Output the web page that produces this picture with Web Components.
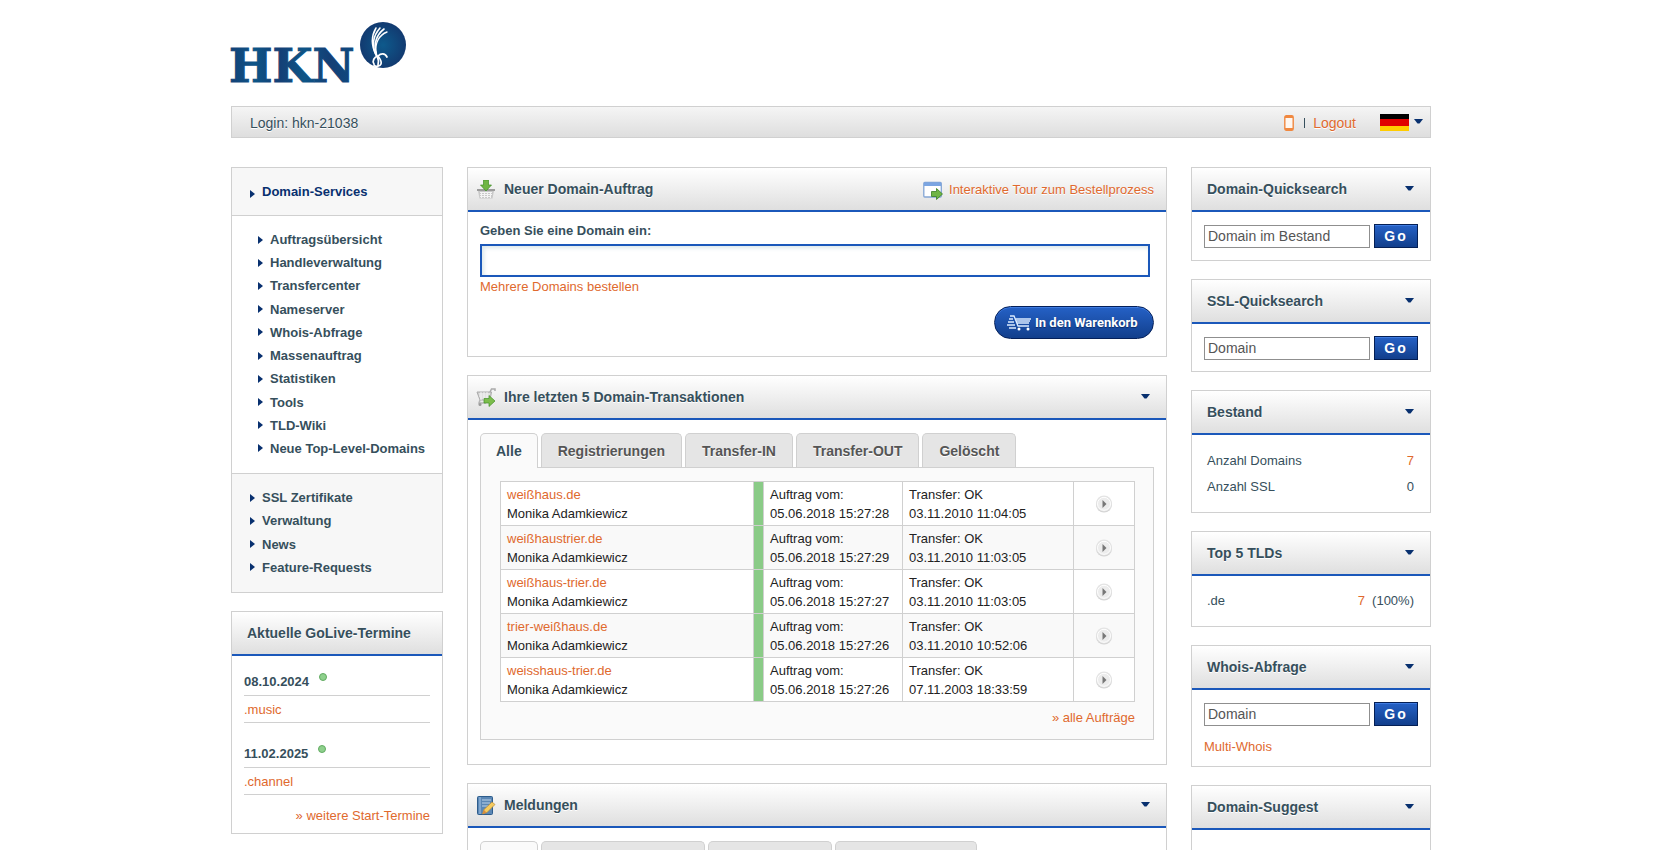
<!DOCTYPE html>
<html lang="de">
<head>
<meta charset="utf-8">
<meta name="viewport" content="width=device-width, initial-scale=1">
<title>HKN Domain-Services</title>
<style>
  html { --ink: #364f5c; --link: #e0692e; --navy: #08306f; --blue: #1b58ba; --line: #d0d0d0; --head: linear-gradient(#fff, #dfdfdf); }
  body { margin: 0; background: #fff; color: var(--ink); font: 13px/18px "Liberation Sans", Arial, sans-serif; }
</style>
</head>
<body>
<hkn-app></hkn-app>

<script>
const define = (name, html, setup) => {
  const tpl = document.createElement('template');
  tpl.innerHTML = `<style>
    *, :host { box-sizing: border-box; }
    a { color: var(--link); text-decoration: none; }
    a:hover { text-decoration: underline; }
  </style>${html}`;
  customElements.define(name, class extends HTMLElement {
    connectedCallback() {
      if (this.shadowRoot) return;
      this.attachShadow({ mode: 'open' }).append(tpl.content.cloneNode(true));
      if (setup) setup(this.shadowRoot, this);
    }
  });
};

define('hkn-arrow', `
  <style>
    :host { display: block; flex: none; width: 9px; height: 5px; }
    svg { display: block; }
  </style>
  <svg width="9" height="5" viewBox="0 0 9 5" aria-hidden="true"><path d="M0 0h9L5.5 4.5h-2z" fill="#08306f"/></svg>`);

define('hkn-logo', `
  <style>:host { display: block; margin-left: -4px; } svg { display: block; }</style>
  <svg width="184" height="78" viewBox="-4 0 184 78" role="img" aria-label="HKN">
    <defs>
      <radialGradient id="g"><stop offset="0" stop-color="#0e5a8c"/><stop offset="1" stop-color="#123a70"/></radialGradient>
      <linearGradient id="t" x1="0" x2="1"><stop offset="0" stop-color="#143f75"/><stop offset=".2" stop-color="#0d5587"/><stop offset=".4" stop-color="#143f75"/><stop offset=".6" stop-color="#0d5587"/><stop offset=".8" stop-color="#143f75"/><stop offset="1" stop-color="#0d4a80"/></linearGradient>
    </defs>
    <text x="-2" y="63" font-family="DejaVu Serif" font-weight="700" font-size="46" fill="url(#t)" stroke="url(#t)" stroke-width="1">HKN</text>
    <circle cx="152" cy="26" r="23" fill="url(#g)"/>
    <g fill="none" stroke="#fff" stroke-linecap="round">
      <path d="M145 36C141 28 139 19 145 9" stroke-width="1.5"/>
      <path d="M145 36C141 27 142 17 149 9" stroke-width="1.6"/>
      <path d="M145 35C143 26 144 17 153 10" stroke-width="1.6"/>
      <path d="M145 33C144 24 148 16 156 13" stroke-width="1.4"/>
      <path d="M145 33c0 5 4 6 2 13M143 45c-2-3 0-7 4-8 3-3 7-3 9 1M143 46c1 2 6 2 7-1 1-3-1-5-3-8" stroke-width="1.7"/>
    </g>
  </svg>`);

define('hkn-login-bar', `
  <style>
    :host { display: flex; align-items: center; height: 32px; padding: 1px 7px 0 18px; border: 1px solid var(--line); background: linear-gradient(#f5f5f5, #dedede); font-size: 14px; text-shadow: 0 1px 0 #fff; }
    .user { flex: 1; }
    nav { display: flex; align-items: center; }
    .phone { margin-right: 10px; display: block; }
    .phone svg, .lang svg { display: block; }
    .bar { width: 1px; height: 10px; background: var(--ink); margin-right: 8px; }
    .lang { display: flex; align-items: center; gap: 5px; margin-left: 24px; padding: 0; border: 0; background: none; }
    .lang hkn-arrow { margin-top: -3px; }
  </style>
  <span class="user">Login: hkn-21038</span>
  <nav>
    <a class="phone" href="#mobil" aria-label="Mobile Ansicht"><svg width="10" height="16" viewBox="0 0 10 16"><rect x=".8" y=".8" width="8.4" height="14.4" rx="1.5" fill="#fff7f0" stroke="#f08840" stroke-width="1.4"/><path d="M1 1h8v2H1zM1 13h8v2H1z" fill="#f08840"/></svg></a>
    <span class="bar"></span>
    <a href="#logout">Logout</a>
    <button class="lang" aria-label="Sprache: Deutsch"><svg width="29" height="17" viewBox="0 0 29 17"><path fill="#000" d="M0 0h29v6H0z"/><path fill="#e00000" d="M0 5h29v7H0z"/><path fill="#fc0" d="M0 12h29v5H0z"/></svg><hkn-arrow></hkn-arrow></button>
  </nav>`);

define('hkn-nav', `
  <style>
    :host { display: block; border: 1px solid var(--line); background: #f7f7f7; font-weight: 700; }
    a { color: var(--ink); display: flex; align-items: center; gap: 7px; line-height: 15px; }
    a::before { content: ""; border-left: 5px solid var(--navy); border-top: 4px solid transparent; border-bottom: 4px solid transparent; }
    .top { height: 47px; padding: 0 18px; display: flex; align-items: center; }
    .top a { color: var(--navy); }
    .top a::before { margin-top: 4px; }
    ul { list-style: none; margin: 0; display: flex; flex-direction: column; justify-content: space-between; }
    .sub { min-height: 259px; padding: 16px 12px 17px 26px; background: #fff; border: solid var(--line); border-width: 1px 0; }
    .more { min-height: 118px; padding: 16px 18px 17px; }
  </style>
  <div class="top"><a href="#domains">Domain-Services</a></div>
  <ul class="sub"></ul>
  <ul class="more"></ul>`, root => {
  const fill = (sel, items) => root.querySelector(sel).innerHTML = items.map(t => `<li><a href="#${t.toLowerCase().replace(/\W+/g, '-')}">${t}</a></li>`).join('');
  fill('.sub', ['Auftragsübersicht', 'Handleverwaltung', 'Transfercenter', 'Nameserver', 'Whois-Abfrage', 'Massenauftrag', 'Statistiken', 'Tools', 'TLD-Wiki', 'Neue Top-Level-Domains']);
  fill('.more', ['SSL Zertifikate', 'Verwaltung', 'News', 'Feature-Requests']);
});

define('hkn-panel', `
  <style>
    :host { display: block; border: 1px solid var(--line); background: #fff; }
    header { display: flex; align-items: center; height: 44px; padding: 0 16px 0 15px; background: var(--head); border-bottom: 2px solid var(--blue); }
    :host([icon]) header { padding-left: 8px; }
    h2 { flex: 1; margin: 0; font-size: 14px; line-height: 18px; text-shadow: 0 1px 0 #fff; }
    :host([icon]) h2 { margin-left: 8px; }
    hkn-arrow { margin-top: -2px; }
    :host([plain]) header { padding-right: 12px; }
    :host([plain]) hkn-arrow { display: none; }
    .body { padding: var(--pad, 12px); }
  </style>
  <header><slot name="icon"></slot><h2></h2><slot name="extra"></slot><hkn-arrow></hkn-arrow></header>
  <div class="body"><slot></slot></div>`, (root, el) => {
  root.querySelector('h2').textContent = el.getAttribute('heading');
});

const icons = {
  basket: `<path d="M1 9h18l-1 2-1.500 7.500h-13L2 11z" fill="#c9c9c9"/><path d="M1 9h18v2H1z" fill="#9c9c9c"/><path d="M4 12.500h12M4 14.500h12M4 16.500h11M5.500 12v6M8.500 12v6M11.500 12v6M14.500 12v6" stroke="#f4f4f4"/><path d="M7.500 0h5v5h3L10 11 4.500 5h3z" fill="#6fb544" stroke="#3f8e25" stroke-width=".7"/>`,
  cart: `<path d="M1 4h14.500L14 12H4z" fill="#cfcfcf" stroke="#aaa"/><path d="M14 4l1.500-3H19v2" stroke="#aaa" fill="none" stroke-width="1.500"/><path d="M3 6h11M3 8h11M4 10h9M5 4v8M8 4v8M11 4v8" stroke="#f3f3f3"/><path d="M4 12l-1 3h7" fill="none" stroke="#b5b5b5" stroke-width="1.500"/><circle cx="4" cy="16.500" r="1.500" fill="#999"/><path d="M8 10.500h5V7.500L19 13l-6 5.500V15H8z" fill="#7cbd4c" stroke="#438f28" stroke-width=".7"/>`,
  note: `<rect x="1.500" y=".5" width="15" height="18" rx="1" fill="#5b87b5" stroke="#2d5c8c"/><path d="M4 1v17" stroke="#7fa6cf" stroke-width="2"/><path d="M6 4h9M6 7h8M6 10h6" stroke="#bcd3ea"/><path d="M6.500 18l1.500-4.500 8-7.500 3 2.500-8 8z" fill="#f6cb5e" stroke="#b58a3a" stroke-width=".7"/><path d="M6.500 18l1.500-4 2.500 2.500z" fill="#d98b3c"/>`,
  tour: `<rect x=".8" y="1.500" width="17.500" height="14.500" rx="1" fill="#fff" stroke="#84a5d4" stroke-width="1.300"/><path d="M1 1.500h17V5H1z" fill="#7ba5e2"/><path d="M8.500 10.500h5V7.500L19.500 13 13.500 18.500V15.500H8.500z" fill="#6fb544" stroke="#3a7d23" stroke-width=".8"/>`
};
define('hkn-icon', `
  <style>:host { display: block; flex: none; } svg { display: block; }</style>
  <svg width="20" height="19" viewBox="0 0 20 19" aria-hidden="true"></svg>`, (root, el) => {
  root.querySelector('svg').innerHTML = icons[el.getAttribute('name')];
});

define('hkn-golive', `
  <style>
    :host { display: block; }
    .date { display: flex; align-items: center; gap: 10px; height: 27px; border-bottom: 1px solid var(--line); }
    .date::after { content: ""; width: 8px; height: 8px; border-radius: 4px; margin-top: -10px; background: #8ed08c; border: 1px solid #62ab62; box-sizing: border-box; }
    .name { height: 27px; line-height: 27px; border-bottom: 1px solid var(--line); margin-bottom: 18px; }
    .all { text-align: right; margin-top: -6px; }
  </style>
  <div class="date"><b>08.10.2024</b></div>
  <div class="name"><a href="#music">.music</a></div>
  <div class="date"><b>11.02.2025</b></div>
  <div class="name"><a href="#channel">.channel</a></div>
  <div class="all"><a href="#termine">» weitere Start-Termine</a></div>`);

define('hkn-order', `
  <style>
    :host { display: flex; flex-direction: column; }
    label { font-weight: 700; line-height: 18px; margin-bottom: 4px; }
    input { height: 33px; margin-right: 4px; padding: 0 8px; border: 2px solid var(--blue); box-shadow: inset 2px 2px 4px #dbe7ea; font: inherit; outline: 0; }
    a { line-height: 20px; }
    button { align-self: flex-end; display: flex; align-items: center; gap: 4px; width: 160px; height: 33px; margin-top: 9px; padding: 0 0 0 12px; border: 1px solid #04205a; border-radius: 17px; color: #fff; background: linear-gradient(#2561c6, #123f8c); box-shadow: inset 0 1px 0 #3f7be0; font: 700 13px Roboto, sans-serif; white-space: nowrap; text-shadow: 0 1px 1px #0b2b66; }
    svg { flex: none; }
  </style>
  <label for="d">Geben Sie eine Domain ein:</label>
  <input id="d" type="text">
  <a href="#mehrere">Mehrere Domains bestellen</a>
  <button><svg width="24" height="16" viewBox="0 0 24 16" aria-hidden="true"><g fill="none" stroke="#dcecff" stroke-width="1.300"><path d="M3 1h4l4 10h11M8 4h16M9 6h14M10 8h12M2 4h4M1 7h6M0 10h8M2 13h7"/></g><circle cx="12" cy="14" r="1.500" fill="#fff"/><circle cx="21" cy="14" r="1.500" fill="#fff"/></svg>In den Warenkorb</button>`);

define('hkn-tabs', `
  <style>
    :host { display: block; }
    [role=tablist] { display: flex; gap: 3px; }
    button { height: 34px; padding: 0 16px; border: 1px solid var(--line); border-bottom: 0; border-radius: 5px 5px 0 0; background: #e5e5e5; color: #555; font: 700 14px "Liberation Sans", Arial, sans-serif; white-space: nowrap; text-shadow: 0 1px 0 #fff; }
    [aria-selected=true] { height: 35px; margin-bottom: -1px; padding: 0 15px; background: #fafafa; color: var(--ink); position: relative; }
    .box { border: 1px solid var(--line); background: #fafafa; padding: 13px 18px 12px 19px; }
  </style>
  <div role="tablist"></div>
  <div class="box"><slot></slot></div>`, (root, el) => {
  root.querySelector('[role=tablist]').innerHTML = el.getAttribute('labels').split('|').map((t, i) => `<button role="tab" aria-selected="${i === 0}">${t}</button>`).join('');
});

define('hkn-orders', `
  <style>
    :host { display: block; color: #222; }
    table { width: 100%; border-collapse: collapse; table-layout: fixed; line-height: 19px; }
    td { height: 44px; border: 1px solid var(--line); padding: 2px 6px; background: #fff; vertical-align: middle; white-space: nowrap; }
    tr:nth-child(even) td { background: #f9f9f9; }
    tr td.ok { background: #8acb87; padding: 0; }
    td.go { padding: 0; }
    button { display: block; margin: 0 auto; padding: 0; border: 0; background: none; width: 18px; height: 18px; }
    .all { text-align: right; line-height: 18px; margin-top: 7px; }
  </style>
  <table><colgroup><col><col style="width:10px"><col style="width:139px"><col style="width:171px"><col style="width:61px"></colgroup><tbody></tbody></table>
  <div class="all"><a href="#alle">» alle Aufträge</a></div>`, root => {
  root.querySelector('tbody').innerHTML = [
    ['weißhaus.de', '15:27:28', '03.11.2010 11:04:05'],
    ['weißhaustrier.de', '15:27:29', '03.11.2010 11:03:05'],
    ['weißhaus-trier.de', '15:27:27', '03.11.2010 11:03:05'],
    ['trier-weißhaus.de', '15:27:26', '03.11.2010 10:52:06'],
    ['weisshaus-trier.de', '15:27:26', '07.11.2003 18:33:59']
  ].map(([d, t, x]) => `<tr><td><a href="#${d}">${d}</a><br>Monika Adamkiewicz</td><td class="ok"></td><td>Auftrag vom:<br>05.06.2018 ${t}</td><td>Transfer: OK<br>${x}</td><td class="go"><button aria-label="Details ${d}"><svg width="18" height="18" viewBox="0 0 18 18"><circle cx="9" cy="9.500" r="8" fill="#d2d2d2"/><circle cx="9" cy="8.500" r="8" fill="#e4e4e4"/><circle cx="9" cy="8.800" r="6.500" fill="#ececec" stroke="#fff"/><path d="M7.500 5l4 4-4 4z" fill="#777"/></svg></button></td></tr>`).join('');
});

define('hkn-go', `
  <style>
    :host { display: block; }
    form { display: flex; align-items: center; gap: 4px; }
    input { flex: 1; min-width: 0; height: 23px; padding: 0 3px; border: 1px solid #8f8f8f; font: 14px "Liberation Sans", Arial, sans-serif; color: #555; background: #fff; }
    button { flex: none; width: 44px; height: 24px; padding: 0; border: 1px solid #041f55; background: linear-gradient(#2561c6, #123f8c); box-shadow: inset 0 1px 0 #3f7be0; color: #fff; font: 700 14px "Liberation Sans", Arial, sans-serif; letter-spacing: 2px; }
  </style>
  <form><input type="text"><button type="button">Go</button></form>`, (root, el) => {
  const i = root.querySelector('input');
  i.value = el.getAttribute('value');
  i.setAttribute('aria-label', el.getAttribute('value'));
});

define('hkn-stat', `
  <style>
    :host { display: flex; justify-content: space-between; padding: 0 4px 0 3px; line-height: 26px; }
    span:last-child { white-space: pre; }
  </style>
  <span><slot></slot></span><span><slot name="value"></slot></span>`);

define('hkn-app', `
  <style>
    :host { display: block; max-width: 1205px; margin: 0 auto; padding: 19px 0 18px 5px; }
    hkn-login-bar { margin: 9px 0 29px; }
    main { display: grid; grid-template-columns: 212px minmax(0, 1fr) 240px; gap: 24px; align-items: start; }
    section { display: flex; flex-direction: column; gap: 18px; min-width: 0; }
    .live { --pad: 13px 12px 8px; }
    .order { --pad: 10px 12px 17px; }
    .tabs { --pad: 13px 12px 24px; }
    .ssl { --pad: 12px 12px 11px; }
    .stat { --pad: 13px 12px 12px; }
    .top { --pad: 12px; }
    .whois { --pad: 12px 12px 10px; }
    .suggest { --pad: 32px 12px; }
    .multi { line-height: 18px; margin-top: 12px; display: block; }
    .tour { display: flex; align-items: center; gap: 6px; margin-top: 2px; text-shadow: 0 1px 0 #fff; }
  </style>
  <hkn-logo></hkn-logo>
  <hkn-login-bar></hkn-login-bar>
  <main>
    <section>
      <hkn-nav></hkn-nav>
      <hkn-panel class="live" plain heading="Aktuelle GoLive-Termine"><hkn-golive></hkn-golive></hkn-panel>
    </section>
    <section>
      <hkn-panel class="order" icon plain heading="Neuer Domain-Auftrag">
        <hkn-icon slot="icon" name="basket"></hkn-icon>
        <a class="tour" slot="extra" href="#tour"><hkn-icon name="tour"></hkn-icon>Interaktive Tour zum Bestellprozess</a>
        <hkn-order></hkn-order>
      </hkn-panel>
      <hkn-panel class="tabs" icon heading="Ihre letzten 5 Domain-Transaktionen">
        <hkn-icon slot="icon" name="cart"></hkn-icon>
        <hkn-tabs labels="Alle|Registrierungen|Transfer-IN|Transfer-OUT|Gelöscht"><hkn-orders></hkn-orders></hkn-tabs>
      </hkn-panel>
      <hkn-panel class="tabs" icon heading="Meldungen">
        <hkn-icon slot="icon" name="note"></hkn-icon>
        <hkn-tabs labels="Alle|Domain-Meldungen|Kündigungen|Systemmeldung">Keine Meldungen</hkn-tabs>
      </hkn-panel>
    </section>
    <section>
      <hkn-panel heading="Domain-Quicksearch"><hkn-go value="Domain im Bestand"></hkn-go></hkn-panel>
      <hkn-panel class="ssl" heading="SSL-Quicksearch"><hkn-go value="Domain"></hkn-go></hkn-panel>
      <hkn-panel class="stat" heading="Bestand">
        <hkn-stat>Anzahl Domains<a slot="value" href="#bestand">7</a></hkn-stat>
        <hkn-stat>Anzahl SSL<span slot="value">0</span></hkn-stat>
      </hkn-panel>
      <hkn-panel class="top" heading="Top 5 TLDs">
        <hkn-stat>.de<span slot="value"><a href="#de">7</a>  (100%)</span></hkn-stat>
      </hkn-panel>
      <hkn-panel class="whois" heading="Whois-Abfrage">
        <hkn-go value="Domain"></hkn-go>
        <a class="multi" href="#multi">Multi-Whois</a>
      </hkn-panel>
      <hkn-panel class="suggest" heading="Domain-Suggest"><hkn-go value="Domain"></hkn-go></hkn-panel>
    </section>
  </main>`);
</script>
</body>
</html>
